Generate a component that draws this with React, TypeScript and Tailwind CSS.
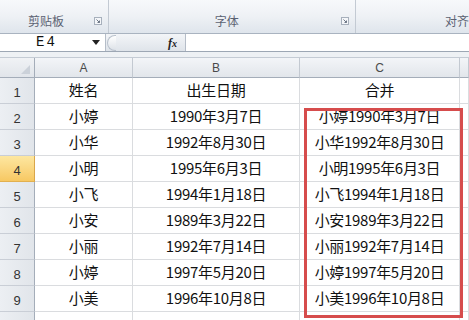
const HEAD = ['姓名', '出生日期', '合并'];

const PEOPLE = [
  ['小婷', '1990年3月7日'],
  ['小华', '1992年8月30日'],
  ['小明', '1995年6月3日'],
  ['小飞', '1994年1月18日'],
  ['小安', '1989年3月22日'],
  ['小丽', '1992年7月14日'],
  ['小婷', '1997年5月20日'],
  ['小美', '1996年10月8日'],
];

const CJK = "font-['Noto_Sans_CJK_SC',sans-serif]";

function Launcher() {
  return (
    <svg width="8" height="8" viewBox="0 0 8 8" className="shrink-0">
      <rect x="0.5" y="0.5" width="7" height="7" fill="#f4f6f9" stroke="#a7b0bc" />
      <path d="M2.5 2.5 L5.5 5.5 M5.5 3.5 V5.5 H3.5" stroke="#6d7786" fill="none" />
    </svg>
  );
}

function RowHead({ n, active }: { n: number; active?: boolean }) {
  return (
    <div
      className={`flex h-[26px] items-end justify-center border-b border-r pb-[1px] font-['Liberation_Sans',sans-serif] text-[13px] text-[#333] ${
        active
          ? 'border-b-[#e2b04f] border-r-[#d9a64a] bg-gradient-to-b from-[#fde7a0] to-[#f7c862]'
          : 'border-b-[#c9ced6] border-r-[#a4adb9] bg-gradient-to-r from-[#eceff3] to-[#e1e5ea]'
      }`}
    >
      {n}
    </div>
  );
}

function Cell({ children }: { children?: React.ReactNode }) {
  return (
    <div
      className={`flex h-[26px] items-center justify-center border-b border-r border-[#dadcdf] text-[15px] tracking-[-0.3px] text-[#111] ${CJK}`}
    >
      {children}
    </div>
  );
}

export default function App() {
  return (
    <div className="relative h-[320px] w-[469px] overflow-hidden bg-white">
      {/* ribbon group labels */}
      <div className="flex h-[34px] border-b border-[#a9b3c0] bg-gradient-to-b from-[#f7f9fb] via-[#eef1f5] to-[#dfe5ec]">
        <div className="flex w-[112px] items-center border-r border-[#c3cad3] pl-[28px] pr-[6px] pt-[8px]">
          <span className={`text-[12px] text-[#5b6272] ${CJK}`}>剪贴板</span>
          <span className="ml-auto">
            <Launcher />
          </span>
        </div>
        <div className="flex w-[253px] items-center border-r border-[#c3cad3] pl-[106px] pr-[6px] pt-[8px]">
          <span className={`text-[12px] text-[#5b6272] ${CJK}`}>字体</span>
          <span className="ml-auto">
            <Launcher />
          </span>
        </div>
        <div className="flex flex-1 items-center pl-[89px] pt-[8px]">
          <span className={`whitespace-nowrap text-[12px] text-[#5b6272] ${CJK}`}>对齐</span>
        </div>
      </div>

      {/* formula bar */}
      <div className="flex h-[18px] border-b border-[#9da7b4] bg-white">
        <div className="flex w-[106px] items-center border-r border-[#b5bdc8] pl-[36px] pr-[5px]">
          <span className="font-['Liberation_Mono',monospace] text-[14px] tracking-[2px] text-[#111]">E4</span>
          <svg width="8" height="5" viewBox="0 0 8 5" className="ml-auto">
            <path d="M0 0 H8 L4 5 Z" fill="#222" />
          </svg>
        </div>
        <div className="flex w-[79px] items-center bg-gradient-to-b from-[#f3f5f8] to-[#dfe4ea] pr-[8px]">
          <div className="ml-[1px] h-[16px] w-[9px] rounded-l-full border border-r-0 border-[#b9c1cc] bg-gradient-to-b from-white to-[#dde2e8]" />
          <span className="ml-auto font-['Liberation_Serif',serif] text-[12px] font-bold italic text-[#222]">
            f<span className="text-[10px]">x</span>
          </span>
        </div>
        <div className="flex-1 border-l border-[#b5bdc8] bg-white" />
      </div>

      <div className="h-[6px] border-b border-[#c4cbd4] bg-[#eef1f4]" />

      {/* sheet */}
      <div className="grid grid-cols-[35px_98px_167px_160px_1fr]">
        <div className="relative h-[20px] border-b border-r border-b-[#a4adb9] border-r-[#a4adb9] bg-gradient-to-b from-[#f0f2f5] to-[#e1e5ea]">
          <svg width="9" height="9" viewBox="0 0 9 9" className="absolute bottom-[3px] right-[4px]">
            <path d="M9 0 V9 H0 Z" fill="#cbd1d9" />
          </svg>
        </div>
        {['A', 'B', 'C', ''].map((c, i) => (
          <div
            key={i}
            className="flex h-[20px] items-center justify-center border-b border-r border-b-[#a4adb9] border-r-[#c3c9d1] bg-gradient-to-b from-[#f3f5f8] to-[#e2e6eb] font-['Liberation_Sans',sans-serif] text-[12px] text-[#4a4a4a]"
          >
            {c}
          </div>
        ))}

        <RowHead n={1} />
        {HEAD.map((h) => (
          <Cell key={h}>{h}</Cell>
        ))}
        <Cell />

        {PEOPLE.map(([name, date], i) => (
          <div key={i} className="contents">
            <RowHead n={i + 2} active={i + 2 === 4} />
            <Cell>{name}</Cell>
            <Cell>{date}</Cell>
            <Cell>
              {name}
              {date}
            </Cell>
            <Cell />
          </div>
        ))}

        <RowHead n={10} />
        <Cell />
        <Cell />
        <Cell />
        <Cell />
      </div>

      {/* red highlight box */}
      <div className="pointer-events-none absolute left-[304px] top-[108px] h-[210px] w-[159px] border-[3px] border-[#d64c4c]" />
    </div>
  );
}
